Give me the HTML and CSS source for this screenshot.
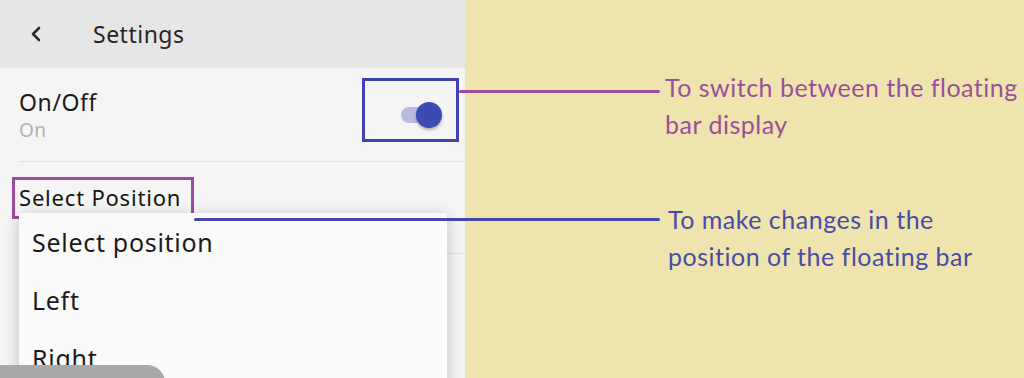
FILE: index.html
```html
<!DOCTYPE html>
<html lang="en">

<head>
  <meta charset="UTF-8">
  <meta name="viewport" content="width=device-width, initial-scale=1.0">
  <title>Floating Bar Settings</title>
  <link rel="stylesheet" href="styles.css">
</head>

<body>
  <div class="screen">
    <div class="phone">
      <header class="appbar">
        <svg class="back" width="14" height="16" viewBox="0 0 14 16">
          <path d="M10 2 L4 8 L10 14" fill="none" stroke="#2b2b2b" stroke-width="2.6" stroke-linecap="round" stroke-linejoin="round"/>
        </svg>
        <h1>Settings</h1>
      </header>

      <div class="pref pref-switch">
        <div class="pref-text">
          <div class="pref-title">On/Off</div>
          <div class="pref-summary">On</div>
        </div>
        <div class="mark mark-switch">
          <span class="switch">
            <span class="track"></span>
            <span class="thumb"></span>
          </span>
        </div>
      </div>

      <div class="pref pref-select">
        <span class="mark mark-select">Select Position</span>
      </div>

      <ul class="dropdown">
        <li>Select position</li>
        <li>Left</li>
        <li>Right</li>
      </ul>

      <div class="nav-pill"></div>
    </div>

    <div class="notes">
      <p class="note note-switch">To switch between the floating<br>bar display</p>
      <p class="note note-position">To make changes in the<br>position of the floating bar</p>
    </div>

    <!-- leader lines from the marked controls to the notes -->
    <span class="leader leader-switch"></span>
    <span class="leader leader-position"></span>
  </div>
</body>

</html>
```

FILE: styles.css
```css
html,
body {
  margin: 0;
  padding: 0;
  width: 1024px;
  height: 378px;
  overflow: hidden;
}

body {
  background-color: #f0e4ae;
  font-family: "Noto Sans", sans-serif;
}

.screen {
  position: relative;
  display: flex;
  width: 1024px;
  height: 378px;
}

.phone {
  position: relative;
  width: 465px;
  height: 378px;
  background-color: #f5f5f6;
  overflow: hidden;
}

.appbar {
  display: flex;
  align-items: center;
  height: 68px;
  background-color: #e6e6e6;
}

.appbar .back {
  margin-left: 29px;
  margin-right: 50px;
}

.appbar h1 {
  margin: 0;
  font-size: 23px;
  font-weight: normal;
  color: #262626;
  letter-spacing: 0.5px;
}

.pref {
  display: flex;
  align-items: flex-start;
  margin-left: 19px;
  border-bottom: 1px solid #e3e3e5;
}

.pref-switch {
  height: 93px;
}

.pref-text {
  flex: 1;
  padding-top: 19px;
}

.pref-title {
  font-size: 23px;
  letter-spacing: 0.6px;
  color: #1a1a1a;
  line-height: 31px;
}

.pref-summary {
  font-size: 19px;
  letter-spacing: 0.4px;
  color: #b0b0b0;
  line-height: 25px;
}

.mark-switch {
  display: flex;
  align-items: center;
  justify-content: flex-end;
  box-sizing: border-box;
  width: 97px;
  height: 64px;
  margin-top: 10px;
  margin-right: 6px;
  padding-right: 14px;
  border: 3px solid #3f41b4;
}

.switch {
  position: relative;
  width: 41px;
  height: 26px;
  margin-top: 9px;
}

.switch .track {
  position: absolute;
  left: 0;
  top: 5px;
  width: 34px;
  height: 16px;
  border-radius: 8px;
  background-color: #b9bbdf;
}

.switch .thumb {
  position: absolute;
  right: 0;
  top: 0;
  width: 26px;
  height: 26px;
  border-radius: 50%;
  background-color: #3c4bb3;
  box-shadow: 0 2px 3px rgba(0, 0, 0, 0.3);
}

.pref-select {
  height: 92px;
  padding-top: 15px;
  box-sizing: border-box;
}

.mark-select {
  display: inline-block;
  margin-left: -7px;
  padding: 3px 10px 5px 4px;
  font-size: 22px;
  letter-spacing: 0.8px;
  line-height: 28px;
  color: #141414;
  border: 3px solid #9b4d9f;
}

.dropdown {
  position: absolute;
  left: 19px;
  top: 213px;
  width: 428px;
  height: 190px;
  margin: 0;
  padding: 0;
  list-style: none;
  background-color: #fafafa;
  box-shadow: 0 3px 14px rgba(0, 0, 0, 0.22);
}

.dropdown li {
  height: 58px;
  line-height: 58px;
  padding-left: 13px;
  font-size: 25px;
  letter-spacing: 0.7px;
  color: #1a1a1a;
}

.nav-pill {
  position: absolute;
  left: 0;
  top: 365px;
  width: 165px;
  height: 30px;
  border-top-right-radius: 18px;
  background-color: #a9a9a9;
}

.notes {
  flex: 1;
  position: relative;
}

.note {
  position: absolute;
  margin: 0;
  font-family: Lato, sans-serif;
  font-size: 25px;
  letter-spacing: 0.5px;
  line-height: 37px;
  white-space: nowrap;
}

.note-switch {
  left: 200px;
  top: 69px;
  color: #9a4f9b;
}

.note-position {
  left: 203px;
  top: 201px;
  color: #484ca7;
}

.leader {
  position: absolute;
  height: 3px;
  border-radius: 2px;
}

.leader-switch {
  left: 459px;
  top: 90px;
  width: 201px;
  background-color: #9d4f9d;
}

.leader-position {
  left: 194px;
  top: 218px;
  width: 466px;
  background-color: #4347b0;
}
```
